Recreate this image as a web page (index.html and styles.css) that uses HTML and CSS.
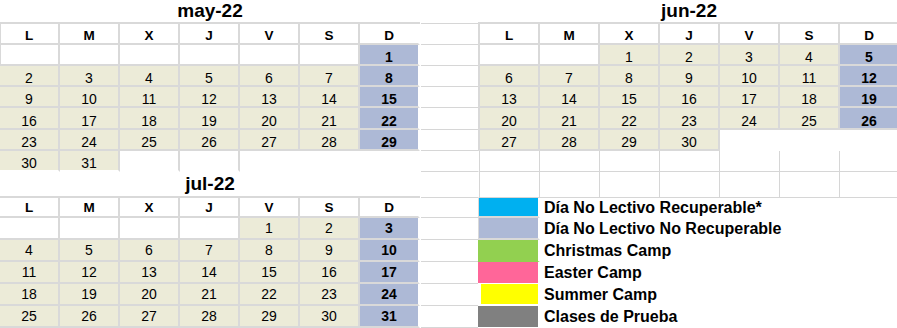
FILE: index.html
```html
<!DOCTYPE html>
<html lang="es">
<head>
<meta charset="utf-8">
<title>Calendario</title>
<link rel="stylesheet" href="styles.css">
</head>
<body>
<div class="sheet">
  <div class="col">
    <div class="month left may">
      <div class="t">may-22</div>
      <div class="c h edge">L</div><div class="c h">M</div><div class="c h">X</div><div class="c h">J</div><div class="c h">V</div><div class="c h">S</div><div class="c h">D</div>
      <div class="c e edge"></div><div class="c e"></div><div class="c e"></div><div class="c e"></div><div class="c e"></div><div class="c e"></div><div class="c s">1</div>
      <div class="c d">2</div><div class="c d">3</div><div class="c d">4</div><div class="c d">5</div><div class="c d">6</div><div class="c d">7</div><div class="c s">8</div>
      <div class="c d">9</div><div class="c d">10</div><div class="c d">11</div><div class="c d">12</div><div class="c d">13</div><div class="c d">14</div><div class="c s">15</div>
      <div class="c d">16</div><div class="c d">17</div><div class="c d">18</div><div class="c d">19</div><div class="c d">20</div><div class="c d">21</div><div class="c s">22</div>
      <div class="c d">23</div><div class="c d">24</div><div class="c d">25</div><div class="c d">26</div><div class="c d">27</div><div class="c d">28</div><div class="c s">29</div>
      <div class="c d">30</div><div class="c d">31</div><div class="c e"></div><div class="c e"></div><div class="c x"></div><div class="c x"></div><div class="c x"></div>
    </div>
    <div class="month left jul">
      <div class="t">jul-22</div>
      <div class="c h">L</div><div class="c h">M</div><div class="c h">X</div><div class="c h">J</div><div class="c h">V</div><div class="c h">S</div><div class="c h">D</div>
      <div class="c e"></div><div class="c e"></div><div class="c e"></div><div class="c e"></div><div class="c d">1</div><div class="c d">2</div><div class="c s">3</div>
      <div class="c d">4</div><div class="c d">5</div><div class="c d">6</div><div class="c d">7</div><div class="c d">8</div><div class="c d">9</div><div class="c s">10</div>
      <div class="c d">11</div><div class="c d">12</div><div class="c d">13</div><div class="c d">14</div><div class="c d">15</div><div class="c d">16</div><div class="c s">17</div>
      <div class="c d">18</div><div class="c d">19</div><div class="c d">20</div><div class="c d">21</div><div class="c d">22</div><div class="c d">23</div><div class="c s">24</div>
      <div class="c d">25</div><div class="c d">26</div><div class="c d">27</div><div class="c d">28</div><div class="c d">29</div><div class="c d">30</div><div class="c s">31</div>
    </div>
  </div>

  <div class="mid">
    <div class="gl"></div><div class="gl"></div><div class="gl"></div><div class="gl"></div><div class="gl"></div>
    <div class="gl"></div><div class="gl"></div><div class="gl"></div><div class="gl"></div><div class="gl"></div>
    <div class="gl"></div><div class="gl"></div><div class="gl"></div><div class="gl"></div><div class="gl"></div>
  </div>

  <div class="col">
    <div class="month right jun">
      <div class="t">jun-22</div>
      <div class="c h">L</div><div class="c h">M</div><div class="c h">X</div><div class="c h">J</div><div class="c h">V</div><div class="c h">S</div><div class="c h">D</div>
      <div class="c e"></div><div class="c e"></div><div class="c d">1</div><div class="c d">2</div><div class="c d">3</div><div class="c d">4</div><div class="c s">5</div>
      <div class="c d">6</div><div class="c d">7</div><div class="c d">8</div><div class="c d">9</div><div class="c d">10</div><div class="c d">11</div><div class="c s">12</div>
      <div class="c d">13</div><div class="c d">14</div><div class="c d">15</div><div class="c d">16</div><div class="c d">17</div><div class="c d">18</div><div class="c s">19</div>
      <div class="c d">20</div><div class="c d">21</div><div class="c d">22</div><div class="c d">23</div><div class="c d">24</div><div class="c d">25</div><div class="c s">26</div>
      <div class="c d">27</div><div class="c d">28</div><div class="c d">29</div><div class="c d">30</div><div class="c x"></div><div class="c x"></div><div class="c x"></div>
    </div>
    <div class="blank">
      <div class="g first"></div><div class="g"></div><div class="g"></div><div class="g"></div><div class="g"></div><div class="g"></div><div class="g"></div>
      <div class="g first"></div><div class="g"></div><div class="g"></div><div class="g"></div><div class="g"></div><div class="g"></div><div class="g"></div>
    </div>
    <div class="legend">
      <div class="sw sw-rec"></div><div class="lb">Día No Lectivo Recuperable*</div>
      <div class="sw sw-norec"></div><div class="lb">Día No Lectivo No Recuperable</div>
      <div class="sw sw-xmas"></div><div class="lb">Christmas Camp</div>
      <div class="sw sw-easter"></div><div class="lb">Easter Camp</div>
      <div class="sw sw-summer"></div><div class="lb">Summer Camp</div>
      <div class="sw sw-trial"></div><div class="lb">Clases de Prueba</div>
    </div>
  </div>
</div>
</body>
</html>
```

FILE: styles.css
```css
* { box-sizing: border-box; }

html, body {
  margin: 0;
  padding: 0;
  background: #fff;
}

body {
  width: 897px;
  height: 328px;
  overflow: hidden;
  font-family: "Liberation Sans", Arial, sans-serif;
  color: #000;
}

.sheet {
  display: grid;
  grid-template-columns: 420px 58px 422px;
}

.col {
  display: flex;
  flex-direction: column;
}

.month {
  display: grid;
  grid-template-columns: repeat(7, 60px);
}

.month.right {
  grid-template-columns: 62px repeat(6, 60px);
}

.may { grid-template-rows: 24px 21px 21px 21px 21px 22px 21px 21px; }
.jun { grid-template-rows: 24px 21px 21px 21px 21px 22px 21px; }
.jul { grid-template-rows: 26px 20px 22px 22px 22px 22px 22px; }

.t {
  grid-column: 1 / -1;
  display: flex;
  align-items: center;
  justify-content: center;
  font-weight: 700;
  font-size: 19px;
  border-bottom: 2px solid #d9d9d9;
}

.c {
  display: flex;
  align-items: flex-end;
  justify-content: center;
  border-right: 2px solid #d9d9d9;
  border-bottom: 2px solid #d9d9d9;
  font-size: 14px;
  line-height: 14px;
}

.h {
  font-weight: 700;
  font-size: 13.5px;
  line-height: 13px;
  padding-bottom: 1px;
}

.d { background: #ecebd8; }

.s {
  background: #adb9d6;
  font-weight: 700;
}

.x {
  border-right-color: #fff;
  border-bottom-color: #fff;
}

.edge { box-shadow: inset 1px 0 0 #d9d9d9; }

.left > .c:nth-child(7n+1) { border-right-color: #fff; }

.may > .c:nth-last-child(-n+7) { border-bottom-color: #fff; }

.right > .c:nth-child(7n+2) { border-left: 2px solid #d9d9d9; }

.jul > .c { padding-bottom: 3px; }
.jul > .h { padding-bottom: 2px; }

.mid {
  display: grid;
  grid-template-rows: 24px 21px 21px 21px 21px 22px 21px 21px 26px 20px 22px 22px 22px 22px 22px;
}

.gl {
  margin-left: 1px;
  border-bottom: 1px solid #d6d6d6;
}

.blank {
  display: grid;
  grid-template-columns: 62px repeat(6, 60px);
  grid-template-rows: 21px 26px;
}

.g {
  border-right: 1px solid #d6d6d6;
  border-bottom: 1px solid #d6d6d6;
}

.g.first {
  border-left: 1px solid #fff;
  box-shadow: inset 1px 0 0 #d6d6d6;
}

.legend {
  display: grid;
  grid-template-columns: 62px 1fr;
  grid-template-rows: 20px 22px 22px 22px 22px 22px;
}

.sw {
  border-right: 2px solid #fff;
}

.sw-rec {
  background: #00b0f0;
  border-left: 1px solid #d9d9d9;
  border-bottom: 2px solid #d9d9d9;
}

.sw-norec {
  background: #adb9d6;
  border-left: 1px solid #d9d9d9;
  border-bottom: 2px solid #d9d9d9;
}

.sw-xmas {
  background: #92d050;
  border-bottom: 1px solid #92d050;
}

.sw-easter {
  background: #ff6699;
  border-bottom: 1px solid #fff;
}

.sw-summer {
  background: #ffff00;
  border-left: 3px solid #fff;
  border-bottom: 2px solid #fff;
}

.sw-trial {
  background: #808080;
  border-bottom: 1px solid #fff;
}

.lb {
  display: flex;
  align-items: center;
  padding-left: 4px;
  padding-bottom: 1px;
  font-weight: 700;
  font-size: 16px;
  white-space: nowrap;
}
```
